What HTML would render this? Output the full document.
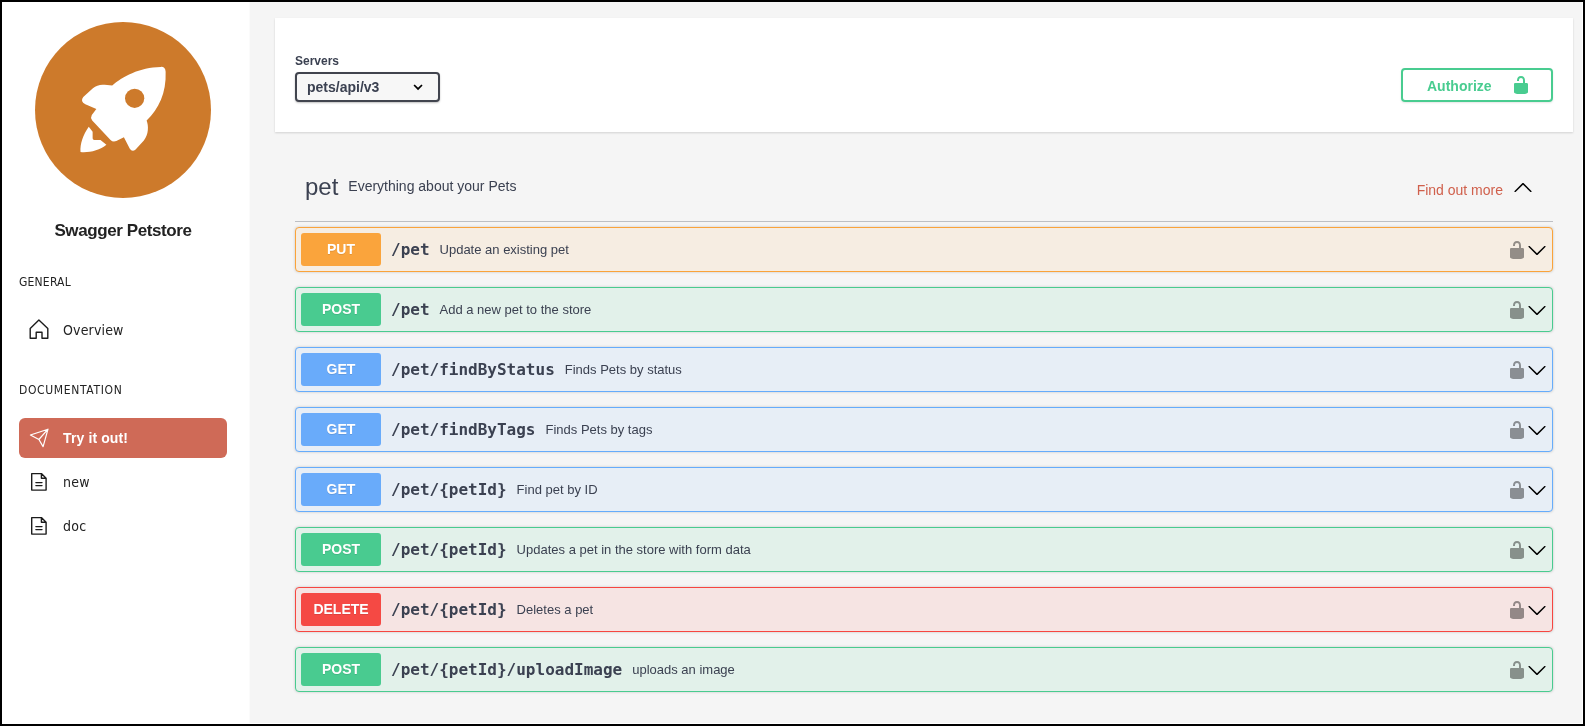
<!DOCTYPE html>
<html lang="en">
<head>
<meta charset="utf-8">
<title>Swagger Petstore</title>
<style>
*{box-sizing:border-box;margin:0;padding:0}
html,body{width:1585px;height:726px;overflow:hidden;background:#000}
body{position:relative;font-family:"Liberation Sans",sans-serif;color:#3b4151}
#frame{will-change:transform;position:absolute;left:2px;top:2px;width:1581px;height:722px;background:#fff;overflow:hidden}
#side{position:absolute;left:0;top:0;width:248px;height:722px;background:#fff;font-family:"DejaVu Sans Condensed","Liberation Sans",sans-serif;color:#222}
#main{box-shadow:-1px 0 0 #fbfbfb;position:absolute;left:248px;top:0;width:1332px;height:721px;background:#f5f5f5;overflow:hidden}
.logo{position:absolute;left:33px;top:20px;width:176px;height:176px;border-radius:50%;background:#cd7a2b}
.logo svg{position:absolute;left:40px;top:38px;width:100px;height:100px;fill:#fff}
.title{position:absolute;left:0;width:242px;top:219px;text-align:center;font-family:"Liberation Sans",sans-serif;font-weight:700;font-size:17px;letter-spacing:-.4px;line-height:20px;color:#222}
.sect{position:absolute;left:17px;font-size:12px;line-height:16px;color:#222}
.nav{position:absolute;left:17px;width:208px;height:40px;border-radius:6px;font-size:14px;line-height:40px;color:#222}
.nav span{position:absolute;left:44px;top:0;white-space:nowrap}
.ic{position:absolute;width:22px;height:22px;fill:none;stroke:#1c1c1c;stroke-width:1.4;stroke-linejoin:round;stroke-linecap:round}.ic.w{stroke:#fff;stroke-width:1.2}
.nav.active{background:#cf6a57;color:#fff;font-weight:700;font-family:"Liberation Sans",sans-serif}
.scheme{position:absolute;left:25px;top:16px;width:1298px;height:114px;background:#fff;box-shadow:0 1px 2px 0 rgba(0,0,0,.15)}
.servers-label{position:absolute;left:20px;top:36px;font-size:12px;font-weight:700;line-height:14px}
.select{position:absolute;left:20px;top:54px;width:145px;height:30px;border:2px solid #41444e;border-radius:4px;background:#f7f7f7;box-shadow:0 1px 2px 0 rgba(0,0,0,.25);font-size:14px;font-weight:700;line-height:26px;padding-left:10px}
.select svg{position:absolute;left:114px;top:8px;width:14px;height:10px}
.auth{box-shadow:0 1px 2px rgba(0,0,0,.1);position:absolute;left:1126px;top:50px;width:152px;height:34px;border:2px solid #49cc90;border-radius:4px;color:#49cc90;font-size:14px;font-weight:700;line-height:32px;padding-left:24px}
.auth svg{position:absolute;left:108px;top:5px;width:20px;height:20px;fill:#49cc90}
.tag{position:absolute;left:45px;top:155px;width:1258px;height:65px;border-bottom:1px solid rgba(59,65,81,.3)}
.tag h3{position:absolute;left:10px;top:15.6px;font-size:24px;font-weight:400;line-height:28px}
.tag small{position:absolute;left:53.3px;top:20.3px;font-size:14px;line-height:18px}
.tag a{position:absolute;right:50px;top:24px;font-size:14px;line-height:18px;color:#d0604c;text-decoration:none}
.tag svg{position:absolute;right:20px;top:20px;width:20px;height:20px}
.op{position:absolute;left:45px;width:1258px;height:45px;border:1px solid;border-radius:4px;box-shadow:0 0 3px rgba(0,0,0,.19)}
.op .m{position:absolute;left:5px;top:5px;width:80px;height:33px;border-radius:3px;color:#fff;font-size:14px;font-weight:700;line-height:33px;text-align:center;text-shadow:0 1px 0 rgba(0,0,0,.1)}
.op .p{position:absolute;left:95px;top:5px;height:33px;line-height:33px;white-space:nowrap;font-size:13px}
.op .p span{position:relative;top:-1px}
.op .p b{font-family:"DejaVu Sans Mono","Liberation Mono",monospace;font-size:16px;font-weight:700;margin-right:10px;vertical-align:baseline}
.op .lock{position:absolute;right:25px;top:12px;width:20px;height:20px;fill:#000;opacity:.4}
.op .arr{position:absolute;right:5px;top:12px;width:20px;height:20px}
.put{border-color:#faa33a;background:#f6ede2}.put .m{background:#faa43c}
.post{border-color:#49cb8f;background:#e2f1ea}.post .m{background:#49cb90}
.get{border-color:#66acfb;background:#e7eef6}.get .m{background:#69abfa}
.delete{border-color:#f64641;background:#f6e4e3}.delete .m{background:#f54944}
</style>
</head>
<body>
<div id="frame">
<div id="side">
  <div class="logo"><svg viewBox="0 0 726 726"><path d="M270 185C340 122 470 52 622 50Q656 48 658 85C664 240 608 352 520 440C535 480 535 540 500 585L440 650Q415 670 398 645L355 560L300 588Q275 598 258 580L125 440Q110 420 122 400L155 355L75 322Q35 300 60 268L130 205Q165 175 215 180Z"/><circle cx="433" cy="278" r="70" fill="#cd7a2b"/><path d="M100 485C60 540 35 610 40 668C100 675 180 655 228 615L185 580L140 580Q128 580 128 568L128 520Z"/></svg></div>
  <div class="title">Swagger Petstore</div>
  <div class="sect" style="top:272px;letter-spacing:.2px">GENERAL</div>
  <div class="nav" style="top:308px"><span style="letter-spacing:.15px">Overview</span></div>
  <svg class="ic" style="left:26px;top:316px" viewBox="28 318 22 22"><path d="M30.2 338.3V328.4L38.9 320.1L47.8 328.4V338.3H42V332.2H36.2V338.3Z"/></svg>
  <div class="sect" style="top:380px;letter-spacing:.65px">DOCUMENTATION</div>
  <div class="nav active" style="top:416px"><span style="letter-spacing:.12px">Try it out!</span></div>
  <svg class="ic w" style="left:26px;top:425px" viewBox="28 427 22 22"><path d="M30.4 435L48 429.2L43.1 446.6L38.9 439.5ZM38.9 439.5L48 429.2"/></svg>
  <div class="nav" style="top:460px"><span style="letter-spacing:.3px">new</span></div>
  <svg class="ic" style="left:26px;top:469px" viewBox="28 471 22 22"><path d="M31.7 473.6H41.4L46.1 478.2V490.1H31.7ZM41.4 473.6V478.2H46.1M35.9 482.6H42M35.9 485.6H42"/></svg>
  <div class="nav" style="top:504px"><span style="letter-spacing:.25px">doc</span></div>
  <svg class="ic" style="left:26px;top:513px" viewBox="28 471 22 22"><path d="M31.7 473.6H41.4L46.1 478.2V490.1H31.7ZM41.4 473.6V478.2H46.1M35.9 482.6H42M35.9 485.6H42"/></svg>
</div>
<div id="main">
  <div class="scheme">
    <div class="servers-label">Servers</div>
    <div class="select">pets/api/v3<svg viewBox="411 82 14 10"><path d="M414.1 85L418.05 88.95L422 85" fill="none" stroke="#000" stroke-width="1.7"/></svg></div>
    <div class="auth">Authorize<svg viewBox="0 0 20 20"><path d="M15.800 8H14V5.600C14 2.703 12.665 1 10 1 7.334 1 6 2.703 6 5.600V6h2v-.801C8 3.754 8.797 3 10 3c1.203 0 2 .754 2 2.199V8H4c-.553 0-1 .646-1 1.199V17c0 .549.428 1.139.951 1.307l1.197.387C5.672 18.861 6.550 19 7.100 19h5.800c.549 0 1.428-.139 1.951-.307l1.196-.387c.524-.167.953-.757.953-1.306V9.199C17 8.646 16.352 8 15.800 8z"/></svg></div>
  </div>
  <div class="tag"><h3>pet</h3><small>Everything about your Pets</small><a>Find out more</a><svg viewBox="0 0 20 20"><path d="M17.418 14.908C17.690 15.176 18.127 15.176 18.397 14.908C18.667 14.640 18.668 14.207 18.397 13.939L10.489 6.109C10.219 5.841 9.782 5.841 9.510 6.109L1.602 13.939C1.332 14.207 1.332 14.640 1.602 14.908C1.873 15.176 2.311 15.176 2.581 14.908L10 7.767L17.418 14.908Z"/></svg></div>
  <div class="op put" style="top:225px"><div class="m">PUT</div><div class="p"><b>/pet</b><span>Update an existing pet</span></div><svg class="lock" viewBox="0 0 20 20"><path d="M15.800 8H14V5.600C14 2.703 12.665 1 10 1 7.334 1 6 2.703 6 5.600V6h2v-.801C8 3.754 8.797 3 10 3c1.203 0 2 .754 2 2.199V8H4c-.553 0-1 .646-1 1.199V17c0 .549.428 1.139.951 1.307l1.197.387C5.672 18.861 6.550 19 7.100 19h5.800c.549 0 1.428-.139 1.951-.307l1.196-.387c.524-.167.953-.757.953-1.306V9.199C17 8.646 16.352 8 15.800 8z"/></svg><svg class="arr" viewBox="0 0 20 20"><path d="M17.418 6.109c.272-.268.709-.268.979 0s.271.701 0 .969l-7.908 7.830c-.270.268-.707.268-.979 0l-7.908-7.830c-.270-.268-.270-.701 0-.969.271-.268.709-.268.979 0L10 13.250l7.418-7.141z"/></svg></div>
  <div class="op post" style="top:285px"><div class="m">POST</div><div class="p"><b>/pet</b><span>Add a new pet to the store</span></div><svg class="lock" viewBox="0 0 20 20"><path d="M15.800 8H14V5.600C14 2.703 12.665 1 10 1 7.334 1 6 2.703 6 5.600V6h2v-.801C8 3.754 8.797 3 10 3c1.203 0 2 .754 2 2.199V8H4c-.553 0-1 .646-1 1.199V17c0 .549.428 1.139.951 1.307l1.197.387C5.672 18.861 6.550 19 7.100 19h5.800c.549 0 1.428-.139 1.951-.307l1.196-.387c.524-.167.953-.757.953-1.306V9.199C17 8.646 16.352 8 15.800 8z"/></svg><svg class="arr" viewBox="0 0 20 20"><path d="M17.418 6.109c.272-.268.709-.268.979 0s.271.701 0 .969l-7.908 7.830c-.270.268-.707.268-.979 0l-7.908-7.830c-.270-.268-.270-.701 0-.969.271-.268.709-.268.979 0L10 13.250l7.418-7.141z"/></svg></div>
  <div class="op get" style="top:345px"><div class="m">GET</div><div class="p"><b>/pet/findByStatus</b><span>Finds Pets by status</span></div><svg class="lock" viewBox="0 0 20 20"><path d="M15.800 8H14V5.600C14 2.703 12.665 1 10 1 7.334 1 6 2.703 6 5.600V6h2v-.801C8 3.754 8.797 3 10 3c1.203 0 2 .754 2 2.199V8H4c-.553 0-1 .646-1 1.199V17c0 .549.428 1.139.951 1.307l1.197.387C5.672 18.861 6.550 19 7.100 19h5.800c.549 0 1.428-.139 1.951-.307l1.196-.387c.524-.167.953-.757.953-1.306V9.199C17 8.646 16.352 8 15.800 8z"/></svg><svg class="arr" viewBox="0 0 20 20"><path d="M17.418 6.109c.272-.268.709-.268.979 0s.271.701 0 .969l-7.908 7.830c-.270.268-.707.268-.979 0l-7.908-7.830c-.270-.268-.270-.701 0-.969.271-.268.709-.268.979 0L10 13.250l7.418-7.141z"/></svg></div>
  <div class="op get" style="top:405px"><div class="m">GET</div><div class="p"><b>/pet/findByTags</b><span>Finds Pets by tags</span></div><svg class="lock" viewBox="0 0 20 20"><path d="M15.800 8H14V5.600C14 2.703 12.665 1 10 1 7.334 1 6 2.703 6 5.600V6h2v-.801C8 3.754 8.797 3 10 3c1.203 0 2 .754 2 2.199V8H4c-.553 0-1 .646-1 1.199V17c0 .549.428 1.139.951 1.307l1.197.387C5.672 18.861 6.550 19 7.100 19h5.800c.549 0 1.428-.139 1.951-.307l1.196-.387c.524-.167.953-.757.953-1.306V9.199C17 8.646 16.352 8 15.800 8z"/></svg><svg class="arr" viewBox="0 0 20 20"><path d="M17.418 6.109c.272-.268.709-.268.979 0s.271.701 0 .969l-7.908 7.830c-.270.268-.707.268-.979 0l-7.908-7.830c-.270-.268-.270-.701 0-.969.271-.268.709-.268.979 0L10 13.250l7.418-7.141z"/></svg></div>
  <div class="op get" style="top:465px"><div class="m">GET</div><div class="p"><b>/pet/{petId}</b><span>Find pet by ID</span></div><svg class="lock" viewBox="0 0 20 20"><path d="M15.800 8H14V5.600C14 2.703 12.665 1 10 1 7.334 1 6 2.703 6 5.600V6h2v-.801C8 3.754 8.797 3 10 3c1.203 0 2 .754 2 2.199V8H4c-.553 0-1 .646-1 1.199V17c0 .549.428 1.139.951 1.307l1.197.387C5.672 18.861 6.550 19 7.100 19h5.800c.549 0 1.428-.139 1.951-.307l1.196-.387c.524-.167.953-.757.953-1.306V9.199C17 8.646 16.352 8 15.800 8z"/></svg><svg class="arr" viewBox="0 0 20 20"><path d="M17.418 6.109c.272-.268.709-.268.979 0s.271.701 0 .969l-7.908 7.830c-.270.268-.707.268-.979 0l-7.908-7.830c-.270-.268-.270-.701 0-.969.271-.268.709-.268.979 0L10 13.250l7.418-7.141z"/></svg></div>
  <div class="op post" style="top:525px"><div class="m">POST</div><div class="p"><b>/pet/{petId}</b><span>Updates a pet in the store with form data</span></div><svg class="lock" viewBox="0 0 20 20"><path d="M15.800 8H14V5.600C14 2.703 12.665 1 10 1 7.334 1 6 2.703 6 5.600V6h2v-.801C8 3.754 8.797 3 10 3c1.203 0 2 .754 2 2.199V8H4c-.553 0-1 .646-1 1.199V17c0 .549.428 1.139.951 1.307l1.197.387C5.672 18.861 6.550 19 7.100 19h5.800c.549 0 1.428-.139 1.951-.307l1.196-.387c.524-.167.953-.757.953-1.306V9.199C17 8.646 16.352 8 15.800 8z"/></svg><svg class="arr" viewBox="0 0 20 20"><path d="M17.418 6.109c.272-.268.709-.268.979 0s.271.701 0 .969l-7.908 7.830c-.270.268-.707.268-.979 0l-7.908-7.830c-.270-.268-.270-.701 0-.969.271-.268.709-.268.979 0L10 13.250l7.418-7.141z"/></svg></div>
  <div class="op delete" style="top:585px"><div class="m">DELETE</div><div class="p"><b>/pet/{petId}</b><span>Deletes a pet</span></div><svg class="lock" viewBox="0 0 20 20"><path d="M15.800 8H14V5.600C14 2.703 12.665 1 10 1 7.334 1 6 2.703 6 5.600V6h2v-.801C8 3.754 8.797 3 10 3c1.203 0 2 .754 2 2.199V8H4c-.553 0-1 .646-1 1.199V17c0 .549.428 1.139.951 1.307l1.197.387C5.672 18.861 6.550 19 7.100 19h5.800c.549 0 1.428-.139 1.951-.307l1.196-.387c.524-.167.953-.757.953-1.306V9.199C17 8.646 16.352 8 15.800 8z"/></svg><svg class="arr" viewBox="0 0 20 20"><path d="M17.418 6.109c.272-.268.709-.268.979 0s.271.701 0 .969l-7.908 7.830c-.270.268-.707.268-.979 0l-7.908-7.830c-.270-.268-.270-.701 0-.969.271-.268.709-.268.979 0L10 13.250l7.418-7.141z"/></svg></div>
  <div class="op post" style="top:645px"><div class="m">POST</div><div class="p"><b>/pet/{petId}/uploadImage</b><span>uploads an image</span></div><svg class="lock" viewBox="0 0 20 20"><path d="M15.800 8H14V5.600C14 2.703 12.665 1 10 1 7.334 1 6 2.703 6 5.600V6h2v-.801C8 3.754 8.797 3 10 3c1.203 0 2 .754 2 2.199V8H4c-.553 0-1 .646-1 1.199V17c0 .549.428 1.139.951 1.307l1.197.387C5.672 18.861 6.550 19 7.100 19h5.800c.549 0 1.428-.139 1.951-.307l1.196-.387c.524-.167.953-.757.953-1.306V9.199C17 8.646 16.352 8 15.800 8z"/></svg><svg class="arr" viewBox="0 0 20 20"><path d="M17.418 6.109c.272-.268.709-.268.979 0s.271.701 0 .969l-7.908 7.830c-.270.268-.707.268-.979 0l-7.908-7.830c-.270-.268-.270-.701 0-.969.271-.268.709-.268.979 0L10 13.250l7.418-7.141z"/></svg></div>
</div>
</div>
</body>
</html>
